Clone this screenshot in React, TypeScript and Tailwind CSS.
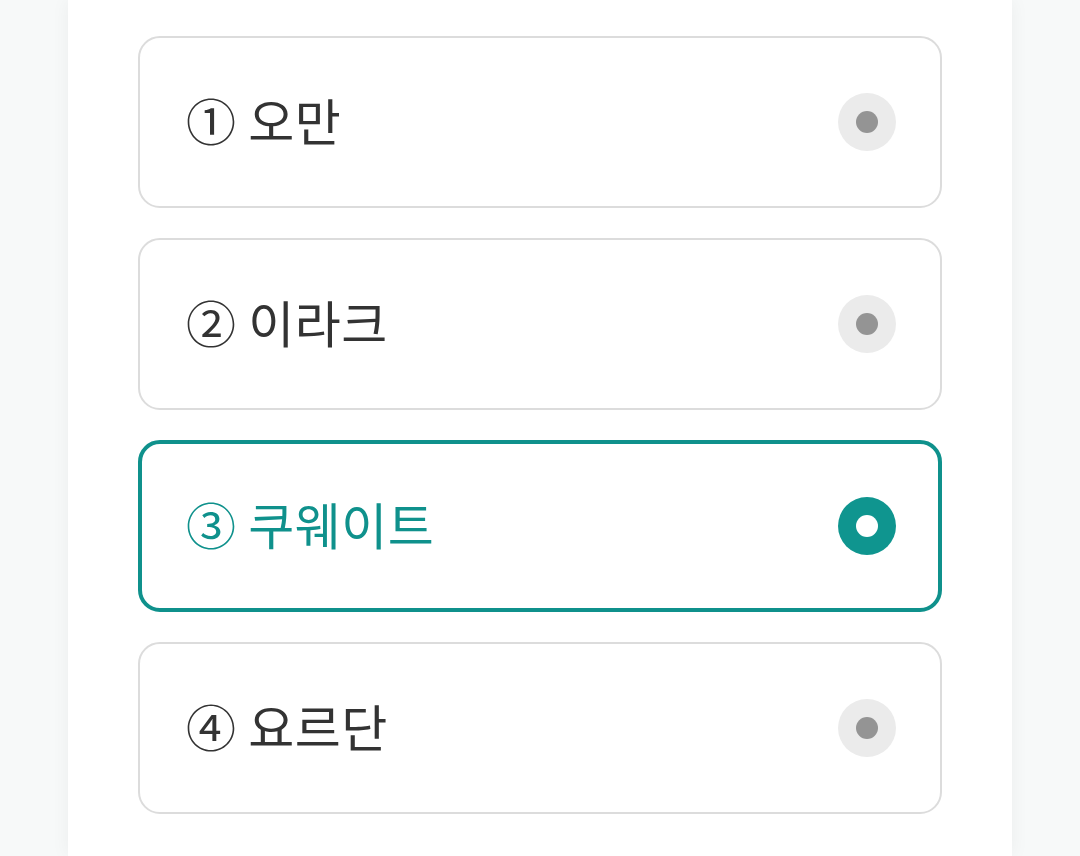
import React from "react";

const options = [
  { label: "① 오만", selected: false },
  { label: "② 이라크", selected: false },
  { label: "③ 쿠웨이트", selected: true },
  { label: "④ 요르단", selected: false },
];

export default function App() {
  return (
    <div
      className="w-[1080px] h-[856px] bg-[#f7f9f9] flex justify-center overflow-hidden"
      style={{ fontFamily: '"Noto Sans CJK KR", "Noto Sans", sans-serif' }}
    >
      <div className="w-[944px] h-full bg-white shadow-[0_0_18px_rgba(0,0,0,0.05)] px-[70px] pt-[36px] flex flex-col gap-[30px]">
        {options.map((o) => (
          <div
            key={o.label}
            className={
              o.selected
                ? "h-[172px] rounded-[22px] border-4 border-[#0f918c] flex items-center justify-between pl-[44px] pr-[42px]"
                : "h-[172px] rounded-[22px] border-2 border-[#dcdcdc] flex items-center justify-between pl-[46px] pr-[44px]"
            }
          >
            <span
              className={
                o.selected
                  ? "text-[50px] leading-none text-[#0f918c] tracking-[0.5px] -translate-y-[3px] font-normal"
                  : "text-[50px] leading-none text-[#333333] tracking-[0.5px] -translate-y-[3px] font-normal"
              }
            >
              {o.label}
            </span>
            {o.selected ? (
              <div className="w-[58px] h-[58px] rounded-full bg-[#0f958f] flex items-center justify-center">
                <div className="w-[22px] h-[22px] rounded-full bg-white" />
              </div>
            ) : (
              <div className="w-[58px] h-[58px] rounded-full bg-[#ebebeb] flex items-center justify-center">
                <div className="w-[22px] h-[22px] rounded-full bg-[#949494]" />
              </div>
            )}
          </div>
        ))}
      </div>
    </div>
  );
}
